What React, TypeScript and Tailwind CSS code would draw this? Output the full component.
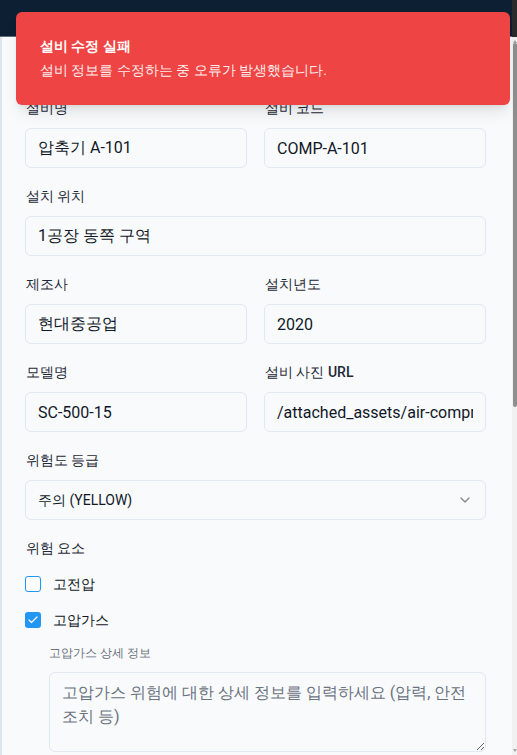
import React from "react";
import { ChevronDown, Check } from "lucide-react";

const FONT = { fontFamily: 'Roboto, "Noto Sans", sans-serif' };

function Field({
  label,
  children,
  span,
}: {
  label: React.ReactNode;
  children: React.ReactNode;
  span?: boolean;
}) {
  return (
    <div className={span ? "col-span-2 flex flex-col" : "flex flex-col"}>
      <div className="h-5 mb-[10px] text-sm leading-5 text-[#1f2937] pl-px">{label}</div>
      {children}
    </div>
  );
}

function TextInput({ value }: { value: string }) {
  return (
    <input
      readOnly
      value={value}
      style={FONT}
      className="h-10 w-full rounded-md border border-[#e2e8f0] bg-[#f8fafc] px-3 text-base text-[#111827] outline-none"
    />
  );
}

export default function App() {
  return (
    <div className="relative w-[517px] h-[755px] overflow-hidden flex flex-col bg-[#f9fafb]" style={FONT}>
      {/* header */}
      <div className="flex h-[37px] shrink-0">
        <div className="flex-1 bg-[#0c1f33] border-b border-[#5f6b78]" />
        <div className="w-[5px] bg-[#2b2b2b]" />
      </div>

      <div className="flex flex-1 min-h-0">
        {/* panel */}
        <div className="flex-1 border-l-2 border-[#dfe5ee] bg-[#f9fafb] pl-[23px] pr-[26px] pt-[61px]">
          <div className="grid grid-cols-2 gap-x-[17px] gap-y-[18px]">
            <Field label="설비명">
              <TextInput value="압축기 A-101" />
            </Field>
            <Field label="설비 코드">
              <TextInput value="COMP-A-101" />
            </Field>
            <Field label="설치 위치" span>
              <TextInput value="1공장 동쪽 구역" />
            </Field>
            <Field label="제조사">
              <TextInput value="현대중공업" />
            </Field>
            <Field label="설치년도">
              <TextInput value="2020" />
            </Field>
            <Field label="모델명">
              <TextInput value="SC-500-15" />
            </Field>
            <Field
              label={
                <span>
                  설비 사진 <span className="font-medium">URL</span>
                </span>
              }
            >
              <TextInput value="/attached_assets/air-compressor-01.png" />
            </Field>
            <Field label="위험도 등급" span>
              <div className="h-10 rounded-md border border-[#e2e8f0] bg-[#f8fafc] px-3 flex items-center justify-between text-sm text-[#111827]">
                <span>주의 (YELLOW)</span>
                <ChevronDown className="w-4 h-4 opacity-50" strokeWidth={2} />
              </div>
            </Field>
            <div className="col-span-2 flex flex-col">
              <div className="h-5 text-sm leading-5 text-[#1f2937] pl-px">위험 요소</div>
              <div className="mt-4 flex flex-col gap-4">
                <div className="flex items-center h-5 gap-3">
                  <div className="w-4 h-4 rounded-[3px] border border-[#2196f3] bg-white" />
                  <span className="text-sm text-[#111827]">고전압</span>
                </div>
                <div className="flex items-center h-5 gap-3">
                  <div className="w-4 h-4 rounded-[3px] bg-[#2196f3] flex items-center justify-center">
                    <Check className="w-3 h-3 text-white" strokeWidth={2.5} />
                  </div>
                  <span className="text-sm text-[#111827]">고압가스</span>
                </div>
              </div>
              <div className="ml-6 mt-[15px] flex flex-col">
                <div className="h-4 text-xs leading-4 text-[#6b7280]">고압가스 상세 정보</div>
                <textarea
                  className="mt-[11px] min-h-[80px] h-[80px] w-full rounded-md border border-[#e2e8f0] bg-[#f8fafc] px-3 py-2 text-base leading-6 text-[#111827] placeholder:text-[#6b7280] outline-none"
                  placeholder="고압가스 위험에 대한 상세 정보를 입력하세요 (압력, 안전 조치 등)"
                  style={FONT}
                />
              </div>
            </div>
          </div>
        </div>

        {/* scrollbar */}
        <div className="w-[5px] bg-[#f1f1f1] flex flex-col items-center">
          <div className="h-[6px] w-full flex items-end justify-center">
            <div className="w-0 h-0 border-l-[2px] border-r-[2px] border-b-[3px] border-l-transparent border-r-transparent border-b-[#a3a3a3]" />
          </div>
          <div className="w-[4px] h-[364px] rounded-full bg-[#8f8f8f]" />
          <div className="flex-1" />
          <div className="h-[6px] w-full flex items-start justify-center">
            <div className="w-0 h-0 border-l-[2px] border-r-[2px] border-t-[3px] border-l-transparent border-r-transparent border-t-[#a3a3a3]" />
          </div>
        </div>
      </div>

      {/* toast */}
      <div className="absolute left-[16px] top-[12px] w-[494px] h-[93px] rounded-md bg-[#ef4444] p-6 shadow-lg text-white">
        <div className="text-sm leading-5 font-semibold">설비 수정 실패</div>
        <div className="mt-1 text-sm leading-5 opacity-90">설비 정보를 수정하는 중 오류가 발생했습니다.</div>
      </div>
    </div>
  );
}
